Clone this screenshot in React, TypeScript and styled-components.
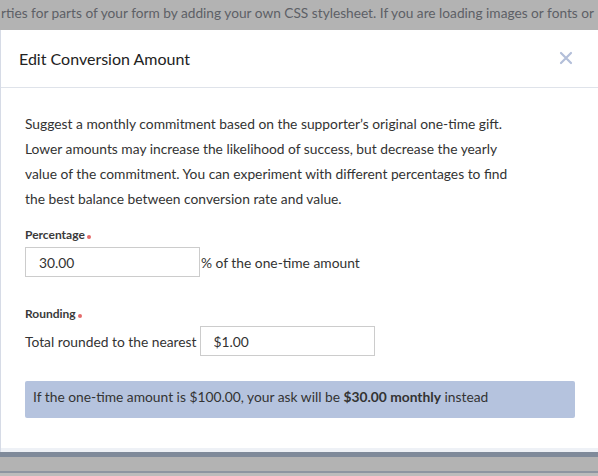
import React from "react";
import styled, { createGlobalStyle } from "styled-components";

const GlobalStyle = createGlobalStyle`
  html, body {
    margin: 0;
    padding: 0;
    background: #b3b3b3;
    overflow: hidden;
  }
  body {
    font-family: Lato, "Open Sans", sans-serif;
    color: #333333;
  }
`;

const Page = styled.div`
  width: 598px;
  height: 476px;
  display: flex;
  flex-direction: column;
  overflow: hidden;
`;

const BackdropText = styled.div`
  height: 30px;
  line-height: 26px;
  font-size: 13.7px;
  color: #5d6066;
  white-space: nowrap;
  overflow: hidden;
  padding-left: 1px;
`;

const Modal = styled.div`
  width: 640px;
  background: #ffffff;
  border-left: 1px solid #d6dbe6;
  display: flex;
  flex-direction: column;
`;

const Header = styled.div`
  height: 57px;
  padding: 0 18px;
  display: flex;
  align-items: center;
  border-bottom: 1px solid #dfe3ea;
`;

const Title = styled.h2`
  margin: 0;
  font-size: 16px;
  font-weight: 400;
  color: #222222;
  flex: 1;
`;

const CloseButton = styled.button`
  border: none;
  background: none;
  padding: 0;
  margin-right: 50px;
  margin-top: -2px;
  width: 14px;
  height: 14px;
  display: flex;
  cursor: pointer;
`;

const Body = styled.div`
  padding: 23px 24px 30px;
  display: flex;
  flex-direction: column;
`;

const Intro = styled.p`
  margin: 0;
  width: 490px;
  font-size: 13.8px;
  line-height: 25px;
  color: #333333;
`;

const Field = styled.div<{ $top: number }>`
  margin-top: ${({ $top }) => $top}px;
  display: flex;
  flex-direction: column;
`;

const Label = styled.label`
  font-size: 12px;
  font-weight: 700;
  color: #3a3a3a;
  line-height: 16px;
  margin-bottom: 4px;
  display: flex;
  align-items: center;
`;

const Required = styled.span`
  width: 4px;
  height: 4px;
  border-radius: 50%;
  background: #e46b6b;
  margin-left: 2px;
  margin-top: 3px;
`;

const InputRow = styled.div`
  display: flex;
  align-items: center;
  font-size: 13.8px;
  color: #333333;
`;

const TextInput = styled.input<{ $gap?: number }>`
  box-sizing: border-box;
  width: 175px;
  height: 30px;
  border: 1px solid #cccccc;
  padding: 0 13px;
  font-family: inherit;
  font-size: 13.8px;
  color: #333333;
  outline: none;
  margin: 0 1px 0 ${({ $gap }) => $gap ?? 0}px;
`;

const Notice = styled.div`
  margin-top: 25px;
  width: 550px;
  box-sizing: border-box;
  height: 37px;
  padding: 7px 8px 0;
  line-height: 17px;
  background: #b5c3de;
  border-radius: 2px;
  font-size: 13.8px;
  color: #333333;

  strong {
    font-weight: 700;
  }
`;

const FooterEdge = styled.div`
  height: 4px;
  background: #eef1f6;
`;

const DarkBand = styled.div`
  height: 5px;
  background: #7f8a9a;
`;

const GrayBand = styled.div`
  height: 14px;
  background: #b3b3b3;
`;

const ThinLine = styled.div`
  height: 2px;
  background: #8e95a1;
`;

const Rest = styled.div`
  flex: 1;
  background: #bcbcbc;
`;

const CloseIcon = () => (
  <svg width="14" height="14" viewBox="0 0 14 14">
    <path d="M2 2 L12 12 M12 2 L2 12" stroke="#b3bfd9" strokeWidth="2.2" strokeLinecap="round" />
  </svg>
);

export default function App() {
  return (
    <>
      <GlobalStyle />
      <Page>
        <BackdropText>
          rties for parts of your form by adding your own CSS stylesheet. If you are loading images or fonts or
        </BackdropText>
        <Modal>
          <Header>
            <Title>Edit Conversion Amount</Title>
            <CloseButton aria-label="Close">
              <CloseIcon />
            </CloseButton>
          </Header>
          <Body>
            <Intro>
              Suggest a monthly commitment based on the supporter’s original one-time gift. Lower amounts may
              increase the likelihood of success, but decrease the yearly value of the commitment. You can
              experiment with different percentages to find the best balance between conversion rate and value.
            </Intro>
            <Field $top={16}>
              <Label>
                Percentage<Required />
              </Label>
              <InputRow>
                <TextInput defaultValue="30.00" />% of the one-time amount
              </InputRow>
            </Field>
            <Field $top={29}>
              <Label>
                Rounding<Required />
              </Label>
              <InputRow>
                Total rounded to the nearest
                <TextInput $gap={3} defaultValue="$1.00" />
              </InputRow>
            </Field>
            <Notice>
              If the one-time amount is $100.00, your ask will be <strong>$30.00 monthly</strong> instead
            </Notice>
          </Body>
          <FooterEdge />
        </Modal>
        <DarkBand />
        <GrayBand />
        <ThinLine />
        <Rest />
      </Page>
    </>
  );
}
